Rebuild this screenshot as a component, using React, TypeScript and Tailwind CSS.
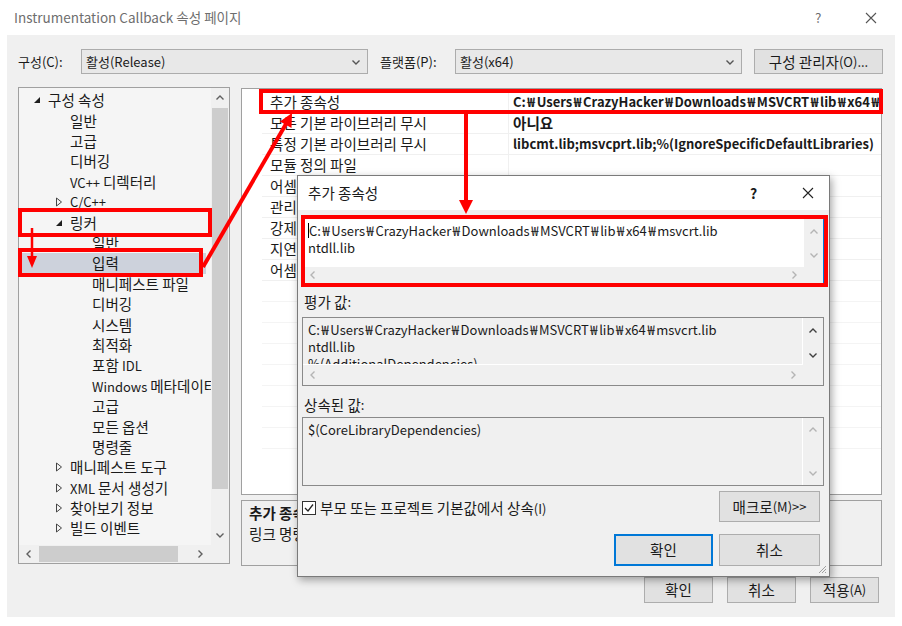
import React from "react"

type Dir = "up" | "down" | "left" | "right"

const chevronPaths: Record<Dir, string> = {
  up: "M1.5 6.5 L5 3 L8.5 6.5",
  down: "M1.5 3.5 L5 7 L8.5 3.5",
  left: "M6.5 1.5 L3 5 L6.5 8.5",
  right: "M3.5 1.5 L7 5 L3.5 8.5",
}

function Chevron({ dir, className }: { dir: Dir; className?: string }) {
  return (
    <svg width="10" height="10" viewBox="0 0 10 10" className={className}>
      <path d={chevronPaths[dir]} fill="none" stroke="currentColor" strokeWidth="1.4" />
    </svg>
  )
}

// Hangul runs are set a bit larger and ₩ a bit wider, so the mix looks like Malgun Gothic
function T({ text }: { text: string }) {
  const parts = text.split(/([\uAC00-\uD7A3][\uAC00-\uD7A3 ]*|₩)/)
  return (
    <>
      {parts.map((p, i) => {
        if (!p) return null
        if (p === "₩") return <span key={i} className="px-[1.6px]">₩</span>
        if (/[\uAC00-\uD7A3]/.test(p)) return <span key={i} className="text-[1.12em]">{p}</span>
        return <React.Fragment key={i}>{p}</React.Fragment>
      })}
    </>
  )
}

function TreeArrow({ kind }: { kind?: "open" | "closed" }) {
  if (!kind) return <span className="w-[15px] shrink-0" />
  return (
    <span className="w-[15px] shrink-0 flex items-center">
      {kind === "open" ? (
        <svg width="8" height="8" viewBox="0 0 8 8">
          <path d="M7 1 L7 7 L1 7 Z" fill="#1e1e1e" />
        </svg>
      ) : (
        <svg width="8" height="10" viewBox="0 0 8 10">
          <path d="M1.5 1 L6.5 5 L1.5 9 Z" fill="none" stroke="#444" strokeWidth="1" />
        </svg>
      )}
    </span>
  )
}

function CloseX({ className }: { className?: string }) {
  return (
    <svg width="12" height="12" viewBox="0 0 12 12" className={className}>
      <path d="M1 1 L11 11 M11 1 L1 11" stroke="currentColor" strokeWidth="1.1" />
    </svg>
  )
}

const treeItems: { label: string; pad: string; arrow?: "open" | "closed"; selected?: boolean }[] = [
  { label: "구성 속성", pad: "pl-[14px]", arrow: "open" },
  { label: "일반", pad: "pl-[36px]" },
  { label: "고급", pad: "pl-[36px]" },
  { label: "디버깅", pad: "pl-[36px]" },
  { label: "VC++ 디렉터리", pad: "pl-[36px]" },
  { label: "C/C++", pad: "pl-[36px]", arrow: "closed" },
  { label: "링커", pad: "pl-[36px]", arrow: "open" },
  { label: "일반", pad: "pl-[58px]" },
  { label: "입력", pad: "pl-[58px]", selected: true },
  { label: "매니페스트 파일", pad: "pl-[58px]" },
  { label: "디버깅", pad: "pl-[58px]" },
  { label: "시스템", pad: "pl-[58px]" },
  { label: "최적화", pad: "pl-[58px]" },
  { label: "포함 IDL", pad: "pl-[58px]" },
  { label: "Windows 메타데이터", pad: "pl-[58px]" },
  { label: "고급", pad: "pl-[58px]" },
  { label: "모든 옵션", pad: "pl-[58px]" },
  { label: "명령줄", pad: "pl-[58px]" },
  { label: "매니페스트 도구", pad: "pl-[36px]", arrow: "closed" },
  { label: "XML 문서 생성기", pad: "pl-[36px]", arrow: "closed" },
  { label: "찾아보기 정보", pad: "pl-[36px]", arrow: "closed" },
  { label: "빌드 이벤트", pad: "pl-[36px]", arrow: "closed" },
]

const gridRows = [
  { label: "추가 종속성", value: "C:₩Users₩CrazyHacker₩Downloads₩MSVCRT₩lib₩x64₩msvcrt.lib;ntdll.lib;%(AdditionalDependencies)" },
  { label: "모든 기본 라이브러리 무시", value: "아니요" },
  { label: "특정 기본 라이브러리 무시", value: "libcmt.lib;msvcprt.lib;%(IgnoreSpecificDefaultLibraries)" },
  { label: "모듈 정의 파일", value: "" },
  { label: "어셈블리에 모듈 추가", value: "" },
  { label: "관리되는 리소스 파일 포함", value: "" },
  { label: "강제 기호 참조", value: "" },
  { label: "지연 로드된 DLL", value: "" },
  { label: "어셈블리 링크 리소스", value: "" },
]

function Combo({ value }: { value: string }) {
  return (
    <div className="w-[287px] h-[25px] border border-[#acacac] bg-[#e8e8e8] flex items-center pl-[4px] pr-[6px]">
      <span className="flex-1">{value}</span>
      <Chevron dir="down" className="text-[#555]" />
    </div>
  )
}

function Button({ label, className }: { label: string; className: string }) {
  return (
    <div className={`border border-[#adadad] bg-[#e1e1e1] flex items-center justify-center ${className}`}>
      <T text={label} />
    </div>
  )
}

function Tree() {
  return (
    <div className="w-[212px] h-[477px] border border-[#a0a0a0] bg-[#f5f5f5] flex flex-col">
      <div className="flex flex-1 min-h-0">
        <div className="flex-1 overflow-hidden pt-[2px]">
          {treeItems.map((item, i) => (
            <div
              key={i}
              className={`h-[20.4px] flex items-center whitespace-nowrap ${item.pad} ${item.selected ? "bg-[#cdd2dc] mr-[5px]" : ""}`}
            >
              <TreeArrow kind={item.arrow} />
              <span>
                <T text={item.label} />
              </span>
            </div>
          ))}
        </div>
        <div className="w-[18px] bg-[#f0f0f0] flex flex-col items-center">
          <div className="h-[20px] flex items-center justify-center text-[#606060]">
            <Chevron dir="up" />
          </div>
          <div className="w-[16px] h-[381px] bg-[#cdcdcd]" />
          <div className="flex-1" />
          <div className="h-[20px] flex items-center justify-center text-[#606060]">
            <Chevron dir="down" />
          </div>
        </div>
      </div>
      <div className="h-[18px] flex bg-[#f0f0f0]">
        <div className="w-[20px] flex items-center justify-center text-[#606060]">
          <Chevron dir="left" />
        </div>
        <div className="w-[139px] h-[16px] mt-[1px] bg-[#cdcdcd]" />
        <div className="flex-1 flex items-center justify-end pr-[6px] text-[#606060]">
          <Chevron dir="right" />
        </div>
        <div className="w-[18px]" />
      </div>
    </div>
  )
}

function Grid() {
  return (
    <div className="h-[407px] border border-[#a0a0a0] bg-white pt-[3px] overflow-hidden">
      {gridRows.map((row) => (
        <div key={row.label} className="h-[21px] flex">
          <div className="w-[20px] shrink-0" />
          <div className="w-[246px] shrink-0 pl-[8px] flex items-center border-b border-[#f0f0f0] whitespace-nowrap overflow-hidden">
            <T text={row.label} />
          </div>
          <div className="flex-1 min-w-0 pl-[4px] flex items-center border-b border-l border-[#f0f0f0] font-bold whitespace-nowrap overflow-hidden">
            <T text={row.value} />
          </div>
        </div>
      ))}
      {[0, 1, 2, 3, 4, 5, 6, 7].map((i) => (
        <div key={i} className="h-[21px] flex">
          <div className="w-[20px] shrink-0" />
          <div className="flex-1 border-b border-[#f4f4f4]" />
        </div>
      ))}
    </div>
  )
}

function Dialog() {
  return (
    <div className="absolute left-[297px] top-[175px] w-[533px] h-[402px] border border-[#7a7a7a] bg-[#f0f0f0] shadow-[2px_3px_8px_rgba(0,0,0,0.35)] flex flex-col">
      <div className="h-[34px] bg-white flex items-center pl-[10px] pr-[13px]">
        <span className="flex-1">
          <T text="추가 종속성" />
        </span>
        <span className="w-[52px] font-bold text-[14px]">?</span>
        <CloseX className="text-[#222] mr-[2px]" />
      </div>
      <div className="flex flex-col pl-[4px] pr-[5px]">
        <div className="mt-[8px] h-[66px] border border-[#0078d7] flex">
          <div className="flex-1 flex flex-col">
            <div className="flex-1 bg-white pl-[5px] pt-[3px] leading-[17px]">
              <div className="flex items-center">
                <span className="w-px h-[15px] bg-black" />
                <span>
                  <T text="C:₩Users₩CrazyHacker₩Downloads₩MSVCRT₩lib₩x64₩msvcrt.lib" />
                </span>
              </div>
              <div>ntdll.lib</div>
            </div>
            <div className="h-[16px] flex items-center justify-between px-[5px] text-[#b4b4b4]">
              <Chevron dir="left" />
              <Chevron dir="right" />
            </div>
          </div>
          <div className="w-[19px] flex flex-col items-center pt-[8px] gap-[13px] text-[#b4b4b4]">
            <Chevron dir="up" />
            <Chevron dir="down" />
          </div>
        </div>

        <div className="mt-[9px] h-[18px] flex items-center pl-[2px]">
          <T text="평가 값:" />
        </div>
        <div className="mt-[6px] h-[69px] border border-[#8a8a8a] flex">
          <div className="flex-1 flex flex-col">
            <div className="h-[47px] border-b border-r border-white pl-[5px] pt-[3px] leading-[17px] overflow-hidden">
              <div>
                <T text="C:₩Users₩CrazyHacker₩Downloads₩MSVCRT₩lib₩x64₩msvcrt.lib" />
              </div>
              <div>ntdll.lib</div>
              <div>%(AdditionalDependencies)</div>
            </div>
            <div className="flex-1 flex items-center justify-between px-[5px] text-[#b4b4b4]">
              <Chevron dir="left" />
              <Chevron dir="right" />
            </div>
          </div>
          <div className="w-[20px] flex flex-col items-center pt-[8px] gap-[14px] text-[#404040]">
            <Chevron dir="up" />
            <Chevron dir="down" />
          </div>
        </div>

        <div className="mt-[10px] h-[18px] flex items-center pl-[2px]">
          <T text="상속된 값:" />
        </div>
        <div className="mt-[3px] h-[69px] border border-[#8a8a8a] flex">
          <div className="flex-1 border-r border-white pl-[5px] pt-[3px] leading-[17px]">
            $(CoreLibraryDependencies)
          </div>
          <div className="w-[20px] flex flex-col items-center justify-between py-[7px] text-[#b4b4b4]">
            <Chevron dir="up" />
            <Chevron dir="down" />
          </div>
        </div>

        <div className="mt-[5px] flex items-start pr-[4px]">
          <div className="flex-1 flex items-center pt-[6px]">
            <div className="w-[14px] h-[14px] border border-[#333] bg-white flex items-center justify-center mr-[4px]">
              <svg width="12" height="12" viewBox="0 0 12 12">
                <path d="M2 6 L5 9 L10 2.5" fill="none" stroke="#222" strokeWidth="1.3" />
              </svg>
            </div>
            <span>
              <T text="부모 또는 프로젝트 기본값에서 상속(I)" />
            </span>
          </div>
          <Button label="매크로(M)>>" className="w-[101px] h-[31px]" />
        </div>

        <div className="mt-[12px] flex justify-end gap-[6px] pr-[4px]">
          <div className="w-[99px] h-[32px] border-2 border-[#0078d7] bg-[#e1e1e1] flex items-center justify-center">
            <T text="확인" />
          </div>
          <Button label="취소" className="w-[101px] h-[32px]" />
        </div>
      </div>
      <svg width="9" height="9" viewBox="0 0 9 9" className="absolute right-[2px] bottom-[2px]">
        <path d="M8 1 L1 8 M8 4 L4 8 M8 7 L7 8" stroke="#a0a0a0" strokeWidth="1" />
      </svg>
    </div>
  )
}

function Annotations() {
  return (
    <svg width="902" height="626" className="absolute left-0 top-0 pointer-events-none">
      <g fill="none" stroke="#ff0000" strokeWidth="4">
        <rect x="261" y="91" width="620" height="21" />
        <rect x="20" y="210" width="190" height="25" />
        <rect x="20" y="250" width="181" height="25" />
        <rect x="303" y="217" width="523" height="68" />
        <line x1="32" y1="228" x2="32" y2="258" strokeWidth="2.5" />
        <line x1="203" y1="267" x2="286" y2="124" />
        <line x1="466" y1="113" x2="466" y2="202" />
      </g>
      <g fill="#ff0000">
        <polygon points="27,256 37,256 32,268" />
        <polygon points="292,113 291.5,128 280,121.5" />
        <polygon points="459,200 473,200 466,214" />
      </g>
    </svg>
  )
}

export default function App() {
  return (
    <div className="relative w-[902px] h-[626px] bg-white overflow-hidden text-[13px] text-[#1a1a1a] font-['Noto_Sans_CJK_KR','Noto_Sans',sans-serif]">
      <div className="h-[35px] flex items-center pl-[14px] pr-[25px] text-[#6e6e6e] text-[13.5px]">
        <span className="flex-1">Instrumentation Callback 속성 페이지</span>
        <span className="w-[50px]">?</span>
        <CloseX className="text-[#555]" />
      </div>

      <div className="ml-[7px] w-[888px] h-[582px] bg-[#f0f0f0] pl-[11px] pt-[14px]">
        <div className="h-[25px] flex items-center">
          <span className="w-[63px]">구성(C):</span>
          <Combo value="활성(Release)" />
          <span className="ml-[12px] w-[75px]">플랫폼(P):</span>
          <Combo value="활성(x64)" />
          <Button label="구성 관리자(O)..." className="ml-[12px] w-[129px] h-[25px]" />
        </div>

        <div className="mt-[13px] flex gap-[11px]">
          <Tree />
          <div className="w-[641px] flex flex-col">
            <div className="mt-[1px]">
              <Grid />
            </div>
            <div className="mt-[5px] h-[66px] border border-[#a0a0a0] px-[7px] pt-[2px] leading-[20px]">
              <div className="font-bold">
                <T text="추가 종속성" />
              </div>
              <div>
                <T text="링크 명령줄에 추가할 추가 항목을 지정합니다(예: kernel32.lib)." />
              </div>
            </div>
            <div className="mt-[11px] flex justify-end gap-[14px] pr-[3px]">
              <Button label="확인" className="w-[69px] h-[26px]" />
              <Button label="취소" className="w-[69px] h-[26px]" />
              <Button label="적용(A)" className="w-[69px] h-[26px]" />
            </div>
          </div>
        </div>
      </div>

      <Dialog />
      <Annotations />
    </div>
  )
}
